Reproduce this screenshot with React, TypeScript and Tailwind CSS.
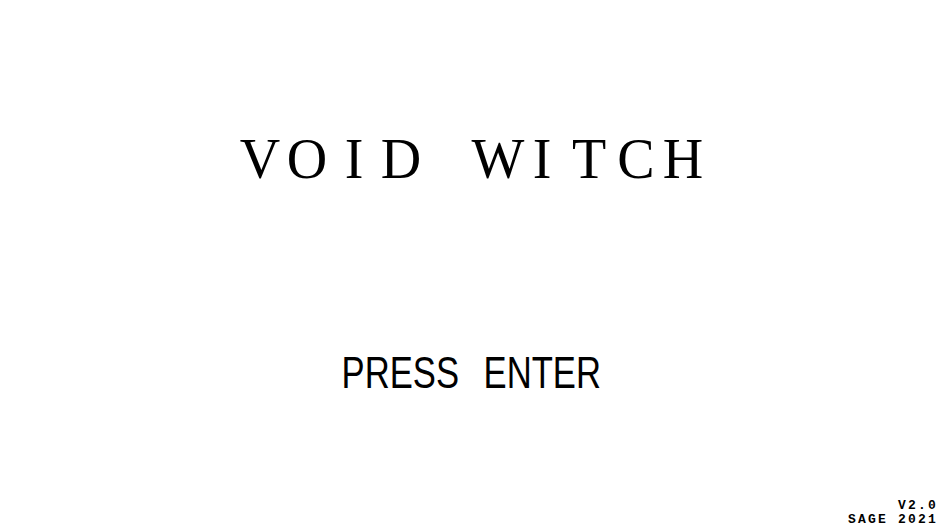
const TITLE = "VOID WITCH".split("");

export default function App() {
  return (
    <div className="flex h-[529px] w-full flex-col overflow-hidden bg-white text-black">
      {/* title: fixed-pitch cells so letters sit on an even grid */}
      <div className="mt-[131px] flex justify-center pl-[3px] font-['Liberation_Serif',serif] text-[56px] font-normal leading-[56px]">
        {TITLE.map((ch, i) => (
          <span key={i} className="inline-block w-[47px] text-center">
            {ch === " " ? "\u00a0" : ch}
          </span>
        ))}
      </div>

      <div className="mt-[163px] flex justify-center gap-[26px] pl-[2px] font-['Liberation_Sans',sans-serif] text-[45px] leading-[45px] whitespace-nowrap">
        <div className="flex w-[116px] justify-center">
          <span className="inline-block origin-center scale-x-[0.77]">PRESS</span>
        </div>
        <div className="flex w-[116px] justify-center">
          <span className="inline-block origin-center scale-x-[0.77]">ENTER</span>
        </div>
      </div>

      <div className="mt-auto flex flex-col items-end pb-[2px] pr-[2px] font-['Liberation_Mono',monospace] text-[13px] font-bold leading-[14px] tracking-[2.2px]">
        <span>V2.0</span>
        <span>SAGE 2021</span>
      </div>
    </div>
  );
}
